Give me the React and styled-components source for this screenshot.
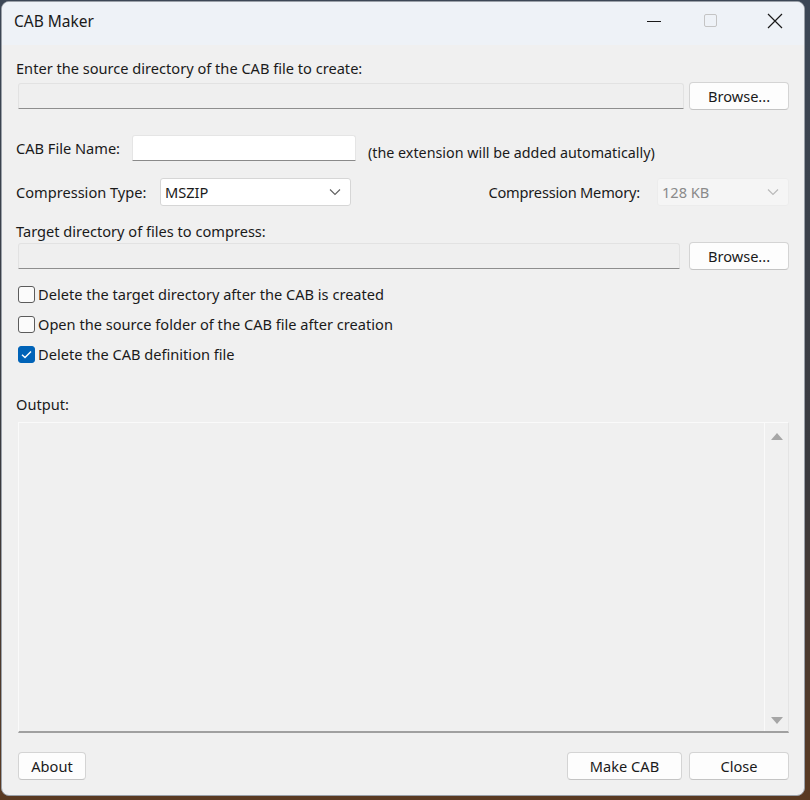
import React from 'react'
import styled, { createGlobalStyle } from 'styled-components'

const GlobalStyle = createGlobalStyle`
  html, body {
    margin: 0;
    padding: 0;
  }
  body {
    width: 810px;
    height: 800px;
    background: linear-gradient(180deg, #3c4756 0%, #3a3a3e 60%, #5a3a22 100%);
    font-family: "Noto Sans", "Open Sans", sans-serif;
    overflow: hidden;
  }
`

const Window = styled.div`
  margin: 1px 0 0 1px;
  width: 804px;
  height: 795px;
  border: 1px solid #9aa0a8;
  border-radius: 8px;
  background: #f0f0f0;
  overflow: hidden;
  display: flex;
  flex-direction: column;
  box-sizing: border-box;
`

const TitleBar = styled.div`
  height: 43px;
  flex: none;
  display: flex;
  align-items: flex-start;
  background: #eef2f7;
  padding-left: 12px;
`

const Title = styled.div`
  flex: 1;
  font-size: 15.5px;
  line-height: 20px;
  padding-top: 9px;
  color: #1a1a1a;
`

const CtrlButton = styled.div`
  width: ${p => p.$w}px;
  height: 38px;
  display: flex;
  align-items: center;
  justify-content: center;
`

const Content = styled.div`
  flex: 1;
  display: flex;
  flex-direction: column;
  padding: 0 15px 0 16px;
  & > * {
    flex: none;
  }
`

const Label = styled.div`
  font-size: 14.6px;
  line-height: 20px;
  color: #1a1a1a;
  margin-top: ${p => p.$top || 0}px;
  margin-left: -2px;
  white-space: nowrap;
  width: ${p => (p.$w ? `${p.$w}px` : 'auto')};
  letter-spacing: ${p => p.$tight ? '-0.2px' : 'normal'};
  flex: none;
`

const Row = styled.div`
  display: flex;
  align-items: center;
  gap: ${p => p.$gap || 0}px;
  margin-top: ${p => p.$top || 0}px;
  height: ${p => p.$h || 28}px;
`

const ReadField = styled.div`
  flex: 1;
  height: 26px;
  box-sizing: border-box;
  background: #efefef;
  border: 1px solid #e2e2e2;
  border-bottom: 1px solid #8e8e8e;
  border-radius: 3px 3px 0 0;
`

const TextInput = styled.div`
  width: 224px;
  height: 26px;
  box-sizing: border-box;
  background: #ffffff;
  border: 1px solid #e5e5e5;
  border-bottom: 1px solid #8a8a8a;
  border-radius: 3px 3px 0 0;
`

const Button = styled.div`
  width: ${p => p.$w || 100}px;
  height: 28px;
  box-sizing: border-box;
  display: flex;
  align-items: center;
  justify-content: center;
  background: #fdfdfd;
  border: 1px solid #d4d4d4;
  border-bottom-color: #c4c4c4;
  border-radius: 4px;
  font-size: 14.6px;
  color: #1a1a1a;
`

const Select = styled.div`
  width: ${p => p.$w}px;
  height: 28px;
  box-sizing: border-box;
  display: flex;
  align-items: center;
  justify-content: space-between;
  padding: 0 9px 0 4px;
  background: ${p => (p.$disabled ? '#f5f5f5' : '#ffffff')};
  border: 1px solid ${p => (p.$disabled ? '#ececec' : '#d6d6d6')};
  border-radius: 3px;
  font-size: 14.6px;
  color: ${p => (p.$disabled ? '#8a8a8a' : '#1a1a1a')};
`

const Hint = styled.div`
  font-size: 14.3px;
  color: #1a1a1a;
  margin-left: 12px;
  margin-top: 8px;
  white-space: nowrap;
`

const Spacer = styled.div`
  flex: 1;
`

const CheckRow = styled.div`
  display: flex;
  align-items: center;
  height: 30px;
  gap: 3px;
  font-size: 14.6px;
  color: #1a1a1a;
  margin-top: ${p => p.$top || 0}px;
`

const Box = styled.div`
  width: 17px;
  height: 17px;
  box-sizing: border-box;
  border-radius: 3px;
  display: flex;
  align-items: center;
  justify-content: center;
  background: ${p => (p.$checked ? '#0063b8' : '#fbfbfb')};
  border: 1px solid ${p => (p.$checked ? '#0063b8' : '#5c5c5c')};
`

const Output = styled.div`
  margin-top: 8px;
  height: 311px;
  box-sizing: border-box;
  display: flex;
  background: #f0f0f0;
  border: 1px solid #fafafa;
  border-bottom: 2px solid #a0a0a0;
  border-right: 1px solid #e4e4e4;
`

const OutputText = styled.div`
  flex: 1;
`

const ScrollBar = styled.div`
  width: 23px;
  border-left: 1px solid #fafafa;
  display: flex;
  flex-direction: column;
  justify-content: space-between;
  align-items: center;
  padding: 9px 0 6px;
`

const Footer = styled.div`
  display: flex;
  align-items: center;
  gap: 7px;
  margin-top: 19px;
`

const Chevron = ({ color }) => (
  <svg width="12" height="8" viewBox="0 0 12 8">
    <path d="M1 1.5 L6 6.5 L11 1.5" fill="none" stroke={color} strokeWidth="1.1" />
  </svg>
)

const Check = () => (
  <svg width="11" height="9" viewBox="0 0 11 9">
    <path d="M1 4.8 L4 7.6 L10 1.4" fill="none" stroke="#ffffff" strokeWidth="1.4" />
  </svg>
)

const Arrow = ({ up }) => (
  <svg width="12" height="8" viewBox="0 0 12 8">
    <path d={up ? 'M0 8 L6 1 L12 8 Z' : 'M0 0 L12 0 L6 7 Z'} fill="#a6a6a6" />
  </svg>
)

export default function App() {
  return (
    <>
      <GlobalStyle />
      <Window>
        <TitleBar>
          <Title>CAB Maker</Title>
          <CtrlButton $w={45}>
            <svg width="16" height="16" viewBox="0 0 16 16">
              <path d="M1 8.5 H15" stroke="#1a1a1a" strokeWidth="1.1" />
            </svg>
          </CtrlButton>
          <CtrlButton $w={70}>
            <svg width="16" height="16" viewBox="0 0 16 16">
              <rect x="1.5" y="1.5" width="12" height="12" rx="1.5" fill="none" stroke="#c4c4c4" strokeWidth="1" />
            </svg>
          </CtrlButton>
          <CtrlButton $w={58}>
            <svg width="16" height="16" viewBox="0 0 16 16">
              <path d="M1 1 L15 15 M15 1 L1 15" stroke="#1a1a1a" strokeWidth="1.2" />
            </svg>
          </CtrlButton>
        </TitleBar>
        <Content>
          <Label $top={13}>Enter the source directory of the CAB file to create:</Label>
          <Row $top={4} $gap={5}>
            <ReadField />
            <Button>Browse...</Button>
          </Row>
          <Row $top={24}>
            <Label $w={116}>CAB File Name:</Label>
            <TextInput />
            <Hint>(the extension will be added automatically)</Hint>
          </Row>
          <Row $top={16}>
            <Label $w={144}>Compression Type:</Label>
            <Select $w={191}>
              MSZIP
              <Chevron color="#606060" />
            </Select>
            <Spacer />
            <Label $tight>Compression Memory:</Label>
            <Spacer style={{ flex: 'none', width: 17 }} />
            <Select $w={132} $disabled>
              128 KB
              <Chevron color="#b8b8b8" />
            </Select>
          </Row>
          <Label $top={15}>Target directory of files to compress:</Label>
          <Row $top={1} $gap={9}>
            <ReadField />
            <Button>Browse...</Button>
          </Row>
          <CheckRow $top={9}>
            <Box />
            Delete the target directory after the CAB is created
          </CheckRow>
          <CheckRow>
            <Box />
            Open the source folder of the CAB file after creation
          </CheckRow>
          <CheckRow>
            <Box $checked>
              <Check />
            </Box>
            Delete the CAB definition file
          </CheckRow>
          <Label $top={25}>Output:</Label>
          <Output>
            <OutputText />
            <ScrollBar>
              <Arrow up />
              <Arrow />
            </ScrollBar>
          </Output>
          <Footer>
            <Button $w={68}>About</Button>
            <Spacer />
            <Button $w={115}>Make CAB</Button>
            <Button>Close</Button>
          </Footer>
        </Content>
      </Window>
    </>
  )
}
